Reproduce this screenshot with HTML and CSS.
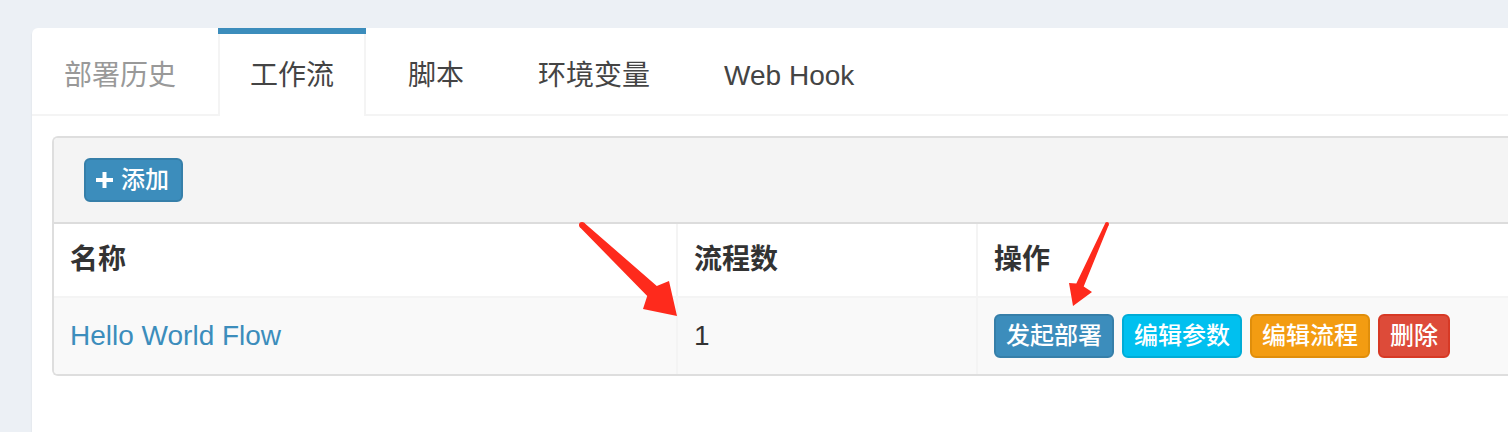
FILE: index.html
```html
<!DOCTYPE html>
<html lang="zh-CN">
<head>
<meta charset="utf-8">
<title>工作流</title>
<link rel="stylesheet" href="styles.css">
</head>
<body>
<div class="page">
  <div class="card">
    <ul class="tabs">
      <li class="tab tab-muted"><a href="#">部署历史</a></li>
      <li class="tab active"><a href="#">工作流</a></li>
      <li class="tab"><a href="#">脚本</a></li>
      <li class="tab"><a href="#">环境变量</a></li>
      <li class="tab"><a href="#">Web Hook</a></li>
    </ul>
    <div class="tab-content">
      <div class="box">
        <div class="box-header">
          <button class="btn btn-primary btn-add">
            <svg class="plus" width="17" height="16" viewBox="0 0 17 16"><path d="M6.5 0h4v6h6.5v4h-6.5v6h-4v-6h-6.5v-4h6.5z" fill="#fff"/></svg>
            <span>添加</span>
          </button>
        </div>
        <table class="table">
          <colgroup>
            <col class="col-name">
            <col class="col-count">
            <col>
          </colgroup>
          <thead>
            <tr><th>名称</th><th>流程数</th><th>操作</th></tr>
          </thead>
          <tbody>
            <tr>
              <td><a class="link" href="#">Hello World Flow</a></td>
              <td>1</td>
              <td>
                <div class="actions">
                  <button class="btn btn-primary">发起部署</button>
                  <button class="btn btn-info">编辑参数</button>
                  <button class="btn btn-warning">编辑流程</button>
                  <button class="btn btn-danger">删除</button>
                </div>
              </td>
            </tr>
          </tbody>
        </table>
      </div>
    </div>
  </div>
</div>
<svg class="annotations" width="1508" height="432" viewBox="0 0 1508 432">
  <g fill="#fe2a1c">
    <circle cx="582" cy="225" r="3"/>
    <polygon points="584.1,222.8 656.8,285.9 669,281 677,316 643,309 647.2,296.1 579.9,227.2"/>
    <circle cx="1107" cy="224" r="2"/>
    <polygon points="1105.2,223.2 1076.3,283.5 1069,283 1073,306 1092,292 1083.7,286.5 1108.8,224.8"/>
  </g>
</svg>
</body>
</html>
```

FILE: styles.css
```css
html, body {
  margin: 0;
  padding: 0;
  overflow: hidden;
}
body {
  background: #ecf0f5;
  font-family: "Liberation Sans", "Noto Sans CJK SC", sans-serif;
  font-size: 28px;
  color: #333;
  width: 1508px;
  height: 432px;
  position: relative;
}
.page {
  padding: 28px 0 0 32px;
}
.card {
  width: 1476px;
  height: 404px;
  background: #fff;
  border-radius: 6px 0 0 0;
  box-shadow: 0 2px 2px rgba(0, 0, 0, 0.1);
}
.tabs {
  display: flex;
  list-style: none;
  margin: 0;
  padding: 0;
  border-bottom: 2px solid #f4f4f4;
  height: 86px;
}
.tab {
  border-top: 6px solid transparent;
  margin-right: 10px;
  margin-bottom: -2px;
  height: 82px;
}
.tab a {
  display: block;
  padding: 22px 32px 20px;
  line-height: 40px;
  color: #444;
  text-decoration: none;
}
.tab-muted a {
  color: #999;
}
.tab.active {
  border-top-color: #3c8dbc;
}
.tab.active a {
  background: #fff;
  padding: 22px 30px 20px;
  border-left: 2px solid #f4f4f4;
  border-right: 2px solid #f4f4f4;
  height: 40px;
}
.tab-content {
  padding: 20px 0 20px 20px;
}
.box {
  border: 2px solid #dedede;
  border-right: 0;
  border-radius: 6px 0 0 6px;
  overflow: hidden;
}
.box-header {
  background: #f4f4f4;
  padding: 20px 30px;
  border-bottom: 2px solid #dcdcdc;
  display: flex;
}
.btn {
  font-family: "Liberation Sans", "Noto Sans CJK SC", sans-serif;
  font-size: 24px;
  font-weight: 500;
  line-height: 36px;
  padding: 2px 10px;
  border: 2px solid transparent;
  border-radius: 6px;
  color: #fff;
  cursor: pointer;
  margin: 0;
}
.btn-add {
  display: flex;
  align-items: center;
  gap: 8px;
  padding: 2px 12px 2px 10px;
}
.plus {
  display: block;
}
.btn-primary {
  background: #3c8dbc;
  border-color: #367fa9;
}
.btn-info {
  background: #00c0ef;
  border-color: #00acd6;
}
.btn-warning {
  background: #f39c12;
  border-color: #e08e0b;
}
.btn-danger {
  background: #dd4b39;
  border-color: #d73925;
}
.table {
  width: 100%;
  border-collapse: collapse;
  table-layout: fixed;
}
.col-name {
  width: 623px;
}
.col-count {
  width: 300px;
}
.table th,
.table td {
  padding: 16px;
  line-height: 40px;
  text-align: left;
  border-left: 2px solid #f4f4f4;
  vertical-align: middle;
}
.table th:first-child,
.table td:first-child {
  border-left: 0;
}
.table th {
  font-weight: bold;
  color: #333;
  background: #fff;
  border-bottom: 2px solid #f4f4f4;
}
.table td {
  background: #f9f9f9;
  color: #333;
}
.link {
  color: #3c8dbc;
  text-decoration: none;
}
.actions {
  display: flex;
  gap: 8px;
}
.annotations {
  position: absolute;
  left: 0;
  top: 0;
  pointer-events: none;
}
```
